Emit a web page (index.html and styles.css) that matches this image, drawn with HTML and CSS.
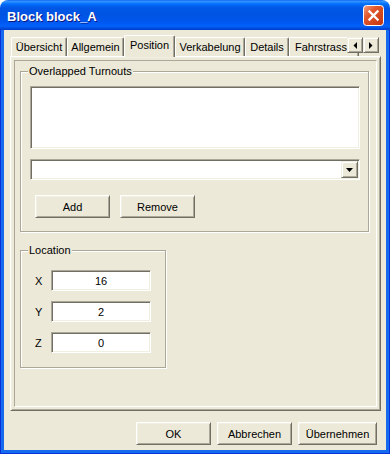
FILE: index.html
```html
<!DOCTYPE html>
<html lang="de">
<head>
<meta charset="utf-8">
<title>Block block_A</title>
<link rel="stylesheet" href="styles.css">
</head>
<body>
<div class="window">
  <div class="titlebar">
    <span class="title">Block block_A</span>
    <span class="close">
      <svg width="21" height="21" viewBox="0 0 21 21">
        <defs>
          <linearGradient id="cg" x1="0" y1="0" x2="1" y2="1">
            <stop offset="0" stop-color="#F2A488"/>
            <stop offset="0.35" stop-color="#E2582C"/>
            <stop offset="1" stop-color="#C2330F"/>
          </linearGradient>
        </defs>
        <rect x="0.5" y="0.5" width="20" height="20" rx="3" fill="url(#cg)" stroke="#fff"/>
        <path d="M6.5 6.5 L14.5 14.5 M14.5 6.5 L6.5 14.5" stroke="#fff" stroke-width="2.3" stroke-linecap="square"/>
      </svg>
    </span>
  </div>
  <div class="frame">
    <div class="client">
      <div class="tabctl">
        <div class="tabs">
          <div class="tab t-uebersicht">Übersicht</div>
          <div class="tab t-allgemein">Allgemein</div>
          <div class="tab tab-active t-position">Position</div>
          <div class="tab t-verkabelung">Verkabelung</div>
          <div class="tab t-details">Details</div>
          <div class="tab t-fahr">Fahrstrasse</div>
          <div class="spin">
            <span class="spin-btn"><svg width="4" height="7" viewBox="0 0 4 7"><path d="M4 0 L4 7 L0.5 3.5 Z" fill="#000"/></svg></span>
            <span class="spin-btn"><svg width="4" height="7" viewBox="0 0 4 7"><path d="M0 0 L0 7 L3.5 3.5 Z" fill="#000"/></svg></span>
          </div>
        </div>
        <div class="panel">
          <div class="page">
            <fieldset class="group group-turnouts">
              <legend>Overlapped Turnouts</legend>
              <div class="listbox"></div>
              <div class="combo">
                <span class="combo-btn"><svg width="7" height="4" viewBox="0 0 7 4"><path d="M0 0 L7 0 L3.5 4 Z" fill="#000"/></svg></span>
              </div>
              <div class="btnrow">
                <button class="btn">Add</button>
                <button class="btn">Remove</button>
              </div>
            </fieldset>
            <fieldset class="group group-location">
              <legend>Location</legend>
              <div class="field"><span class="field-label">X</span><span class="edit">16</span></div>
              <div class="field"><span class="field-label">Y</span><span class="edit">2</span></div>
              <div class="field"><span class="field-label">Z</span><span class="edit">0</span></div>
            </fieldset>
          </div>
        </div>
      </div>
      <div class="footer">
        <button class="btn btn-dlg">OK</button>
        <button class="btn btn-dlg">Abbrechen</button>
        <button class="btn btn-dlg btn-wide">Übernehmen</button>
      </div>
    </div>
  </div>
</div>
</body>
</html>
```

FILE: styles.css
```css
* { box-sizing: border-box; }

body {
  margin: 0;
  background: #ffffff;
  font-family: "Liberation Sans", Arial, sans-serif;
  font-size: 11px;
  color: #000;
}

.window {
  width: 390px;
  height: 454px;
  display: flex;
  flex-direction: column;
}

/* ---------- title bar ---------- */
.titlebar {
  height: 30px;
  flex: none;
  display: flex;
  align-items: center;
  padding: 0 6px 0 7px;
  border-radius: 8px 8px 0 0;
  background: linear-gradient(to bottom,
    #0058EE 0px, #3A93FF 1px, #288EFF 2px, #127DFF 3px, #036FFC 4px,
    #0262EE 6px, #0057E5 8px, #0054E3 14px, #0055EB 20px, #005BF5 24px,
    #0062FC 26px, #0059F0 27px, #0044D1 29px, #003DD7 30px);
}

.title {
  flex: 1;
  padding-top: 3px;
  color: #fff;
  font-family: "Liberation Sans", Arial, sans-serif;
  font-weight: bold;
  font-size: 13px;
  text-shadow: 1px 1px 0 #0A1883;
}

.close {
  width: 21px;
  height: 21px;
  display: block;
}
.close svg { display: block; }

/* ---------- frame ---------- */
.frame {
  flex: 1;
  display: flex;
  background: #0831D9;
  padding: 0 1px 1px 1px;
}

.client {
  flex: 1;
  display: flex;
  flex-direction: column;
  background: #ECE9D8;
  border: solid #166AEE;
  border-width: 0 3px 3px 3px;
  padding: 5px 5px 0 6px;
}

/* ---------- tab control ---------- */
.tabctl {
  flex: 1;
  display: flex;
  flex-direction: column;
}

.tabs {
  height: 22px;
  flex: none;
  display: flex;
  align-items: flex-start;
  padding-left: 1px;
  position: relative;
  z-index: 1;
  overflow: hidden;
}

.tab {
  flex: none;
  height: 19px;
  margin-top: 2px;
  display: flex;
  align-items: center;
  justify-content: center;
  white-space: nowrap;
  background: #ECE9D8;
  border-top: 1px solid #fff;
  border-left: 1px solid #fff;
  border-right: 1px solid #716F64;
  border-radius: 2px 2px 0 0;
  box-shadow: inset -1px 0 0 #ACA899;
}

.t-uebersicht { width: 56px; }
.t-allgemein { width: 57px; }
.t-position { width: 51px; }
.t-verkabelung { width: 70px; }
.t-details { width: 44px; }
.t-fahr { width: 70px; justify-content: flex-start; padding-left: 5px; }

.tab-active {
  height: 22px;
  margin-top: 0;
  padding-bottom: 3px;
}

.spin {
  position: absolute;
  top: 2px;
  right: 2px;
  display: flex;
}

.spin-btn {
  width: 16px;
  height: 16px;
  display: flex;
  align-items: center;
  justify-content: center;
  background: #ECE9D8;
  border: 1px solid;
  border-color: #F1EFE2 #716F64 #716F64 #F1EFE2;
  box-shadow: inset 1px 1px 0 #fff, inset -1px -1px 0 #ACA899;
}
.spin-btn svg { display: block; }

.panel {
  flex: 1;
  margin-top: -1px;
  border: 1px solid;
  border-color: #fff #716F64 #716F64 #fff;
  box-shadow: inset 1px 1px 0 #F1EFE2, inset -1px -1px 0 #ACA899;
  padding: 3px;
  display: flex;
}

.page {
  flex: 1;
  border: 1px solid;
  border-color: #ACA899 #fff #fff #ACA899;
  padding: 0 5px;
}

/* ---------- group boxes ---------- */
.group {
  margin: 0;
  border: 1px solid #ACA899;
  box-shadow: inset 1px 1px 0 #fff, 1px 1px 0 #fff;
  padding: 8px 8px 13px 9px;
}

.group legend {
  padding: 0 1px;
  margin-left: -2px;
  line-height: 13px;
  background: #ECE9D8;
}

.group-turnouts {
  width: 349px;
  margin: 4px 0 0 0;
}

.group-location {
  width: 146px;
  margin: 12px 0 0 0;
  padding: 13px 8px 14px 14px;
}
.group-location legend { margin-left: -7px; }

/* ---------- sunken controls ---------- */
.listbox, .combo, .edit {
  background: #fff;
  border: 1px solid;
  border-color: #ACA899 #fff #fff #ACA899;
  box-shadow: inset 1px 1px 0 #716F64, inset -1px -1px 0 #F1EFE2;
}

.listbox {
  width: 330px;
  height: 63px;
}

.combo {
  width: 330px;
  height: 21px;
  margin-top: 10px;
  padding: 1px;
  display: flex;
  justify-content: flex-end;
}

.combo-btn {
  width: 17px;
  height: 17px;
  display: flex;
  align-items: center;
  justify-content: center;
  background: #ECE9D8;
  border: 1px solid;
  border-color: #F1EFE2 #716F64 #716F64 #F1EFE2;
  box-shadow: inset 1px 1px 0 #fff, inset -1px -1px 0 #ACA899;
}
.combo-btn svg { display: block; }

.btnrow {
  display: flex;
  gap: 10px;
  margin-top: 15px;
  padding-left: 5px;
}

/* ---------- buttons ---------- */
.btn {
  width: 75px;
  height: 23px;
  padding: 0;
  font-family: "Liberation Sans", Arial, sans-serif;
  font-size: 11px;
  color: #000;
  background: #ECE9D8;
  border: 1px solid;
  border-color: #fff #716F64 #716F64 #fff;
  box-shadow: inset 1px 1px 0 #F1EFE2, inset -1px -1px 0 #ACA899;
}

/* ---------- location fields ---------- */
.field {
  display: flex;
  align-items: center;
}
.field + .field { margin-top: 10px; }

.field-label { width: 16px; }

.edit {
  width: 100px;
  height: 21px;
  display: flex;
  align-items: center;
  justify-content: center;
}

/* ---------- footer ---------- */
.footer {
  height: 39px;
  flex: none;
  display: flex;
  justify-content: flex-end;
  align-items: flex-start;
  gap: 6px;
  padding: 11px 4px 0 0;
}

.btn-wide { width: 79px; }
```
